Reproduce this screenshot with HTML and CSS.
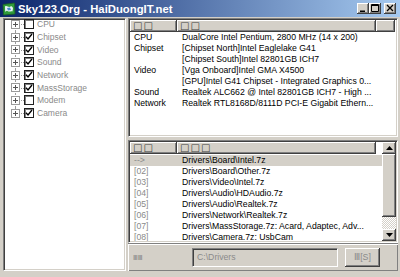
FILE: index.html
```html
<!DOCTYPE html>
<html lang="vi">
<head>
  <meta charset="UTF-8">
  <title>Sky123.Org - HaiDuongIT.net</title>
  <link rel="stylesheet" href="styles.css">
</head>
<body>
  <div class="window">
    <div class="titlebar">
      <svg class="app-icon" width="14" height="14" viewBox="0 0 14 14">
        <path d="M1 2.5 L12.5 1 L13 12 L1.5 13 Z" fill="#2f9b3a" stroke="#1c5e24" stroke-width=".8"/>
        <path d="M3 4.5 C5 3 6.5 6 8.5 4.5 C10 3.5 10.5 5 11 6 L10.5 9.5 C9 8.5 7.5 10.5 5.5 9 C4.5 8.3 3.8 9.5 3.2 10 Z" fill="#e8f4f8"/>
        <path d="M5 6 L8 5.5 L9 8 L6 8.5 Z" fill="#4a8ad0"/>
      </svg>
      <span class="title">Sky123.Org - HaiDuongIT.net</span>
      <div class="caption-btns">
        <span class="cap-btn">
          <svg width="12" height="11" viewBox="0 0 12 11"><path d="M3 7.5h5v1.5H3z" fill="#000"/></svg>
        </span>
        <span class="cap-btn">
          <svg width="12" height="11" viewBox="0 0 12 11"><path d="M2.5 1.5h7v7h-7z M2.5 2.5h7" fill="none" stroke="#000"/></svg>
        </span>
        <span class="cap-btn close">
          <svg width="12" height="11" viewBox="0 0 12 11"><path d="M3 2l6 6M9 2l-6 6" stroke="#000" stroke-width="1.3"/></svg>
        </span>
      </div>
    </div>

    <div class="main">
      <ul class="tree sunken">
        <li class="node"><span class="twig"><svg class="exp" viewBox="0 0 9 9"><rect x=".5" y=".5" width="8" height="8" fill="#fff" stroke="#9a9a9a"/><path d="M2 4.5h5M4.5 2v5" stroke="#555"/></svg></span><span class="check"></span><span class="label">CPU</span></li>
        <li class="node"><span class="twig"><svg class="exp" viewBox="0 0 9 9"><rect x=".5" y=".5" width="8" height="8" fill="#fff" stroke="#9a9a9a"/><path d="M2 4.5h5M4.5 2v5" stroke="#555"/></svg></span><span class="check on"><svg viewBox="0 0 8 8"><path d="M1 3.8l2 2.2 4-5" fill="none" stroke="#000" stroke-width="1.4"/></svg></span><span class="label">Chipset</span></li>
        <li class="node"><span class="twig"><svg class="exp" viewBox="0 0 9 9"><rect x=".5" y=".5" width="8" height="8" fill="#fff" stroke="#9a9a9a"/><path d="M2 4.5h5M4.5 2v5" stroke="#555"/></svg></span><span class="check on"><svg viewBox="0 0 8 8"><path d="M1 3.8l2 2.2 4-5" fill="none" stroke="#000" stroke-width="1.4"/></svg></span><span class="label">Video</span></li>
        <li class="node"><span class="twig"><svg class="exp" viewBox="0 0 9 9"><rect x=".5" y=".5" width="8" height="8" fill="#fff" stroke="#9a9a9a"/><path d="M2 4.5h5M4.5 2v5" stroke="#555"/></svg></span><span class="check on"><svg viewBox="0 0 8 8"><path d="M1 3.8l2 2.2 4-5" fill="none" stroke="#000" stroke-width="1.4"/></svg></span><span class="label">Sound</span></li>
        <li class="node"><span class="twig"><svg class="exp" viewBox="0 0 9 9"><rect x=".5" y=".5" width="8" height="8" fill="#fff" stroke="#9a9a9a"/><path d="M2 4.5h5M4.5 2v5" stroke="#555"/></svg></span><span class="check on"><svg viewBox="0 0 8 8"><path d="M1 3.8l2 2.2 4-5" fill="none" stroke="#000" stroke-width="1.4"/></svg></span><span class="label">Network</span></li>
        <li class="node"><span class="twig"><svg class="exp" viewBox="0 0 9 9"><rect x=".5" y=".5" width="8" height="8" fill="#fff" stroke="#9a9a9a"/><path d="M2 4.5h5M4.5 2v5" stroke="#555"/></svg></span><span class="check on"><svg viewBox="0 0 8 8"><path d="M1 3.8l2 2.2 4-5" fill="none" stroke="#000" stroke-width="1.4"/></svg></span><span class="label">MassStorage</span></li>
        <li class="node"><span class="twig"><svg class="exp" viewBox="0 0 9 9"><rect x=".5" y=".5" width="8" height="8" fill="#fff" stroke="#9a9a9a"/><path d="M2 4.5h5M4.5 2v5" stroke="#555"/></svg></span><span class="check"></span><span class="label">Modem</span></li>
        <li class="node"><span class="twig"><svg class="exp" viewBox="0 0 9 9"><rect x=".5" y=".5" width="8" height="8" fill="#fff" stroke="#9a9a9a"/><path d="M2 4.5h5M4.5 2v5" stroke="#555"/></svg></span><span class="check on"><svg viewBox="0 0 8 8"><path d="M1 3.8l2 2.2 4-5" fill="none" stroke="#000" stroke-width="1.4"/></svg></span><span class="label">Camera</span></li>
      </ul>

      <div class="right">
        <div class="info sunken">
          <div class="head info-cols">
            <span class="hcell">□□</span>
            <span class="hcell">□□</span>
            <span class="hcell"></span>
          </div>
          <div class="row info-cols"><span>CPU</span><span>DualCore Intel Pentium, 2800 MHz (14 x 200)</span></div>
          <div class="row info-cols"><span>Chipset</span><span>[Chipset North]Intel Eaglelake G41</span></div>
          <div class="row info-cols"><span></span><span>[Chipset South]Intel 82801GB ICH7</span></div>
          <div class="row info-cols"><span>Video</span><span>[Vga Onboard]Intel GMA X4500</span></div>
          <div class="row info-cols"><span></span><span>[GPU]Intel G41 Chipset - Integrated Graphics 0...</span></div>
          <div class="row info-cols"><span>Sound</span><span>Realtek ALC662 @ Intel 82801GB ICH7 - High ...</span></div>
          <div class="row info-cols"><span>Network</span><span>Realtek RTL8168D/8111D PCI-E Gigabit Ethern...</span></div>
        </div>

        <div class="drivers sunken">
          <div class="list">
            <div class="head drv-cols">
              <span class="hcell">□□</span>
              <span class="hcell">□□□</span>
            </div>
            <div class="rows">
              <div class="row drv-cols current"><span class="num">--&gt;</span><span>Drivers\Board\Intel.7z</span></div>
              <div class="row drv-cols"><span class="num">[02]</span><span>Drivers\Board\Other.7z</span></div>
              <div class="row drv-cols"><span class="num">[03]</span><span>Drivers\Video\Intel.7z</span></div>
              <div class="row drv-cols"><span class="num">[04]</span><span>Drivers\Audio\HDAudio.7z</span></div>
              <div class="row drv-cols"><span class="num">[05]</span><span>Drivers\Audio\Realtek.7z</span></div>
              <div class="row drv-cols"><span class="num">[06]</span><span>Drivers\Network\Realtek.7z</span></div>
              <div class="row drv-cols"><span class="num">[07]</span><span>Drivers\MassStorage.7z: Acard, Adaptec, Adv...</span></div>
              <div class="row drv-cols"><span class="num">[08]</span><span>Drivers\Camera.7z: UsbCam</span></div>
            </div>
          </div>
          <div class="vscroll">
            <span class="sb-btn"><svg width="7" height="4" viewBox="0 0 7 4"><path d="M3.5 0L7 4H0z" fill="#000"/></svg></span>
            <span class="sb-thumb"></span>
            <span class="sb-track"></span>
            <span class="sb-btn"><svg width="7" height="4" viewBox="0 0 7 4"><path d="M0 0h7L3.5 4z" fill="#000"/></svg></span>
          </div>
        </div>

        <div class="bottom">
          <span class="path-label">ⅢⅢ</span>
          <span class="path-field">C:\Drivers</span>
          <span class="btn">Ⅲ[S]</span>
        </div>
      </div>
    </div>
  </div>
</body>
</html>
```

FILE: styles.css
```css
* {
  box-sizing: border-box;
}

body {
  margin: 0;
  background: #d4d0c8;
  font-family: "Liberation Sans", Arial, sans-serif;
  font-size: 8.7px;
  color: #000;
}

.window {
  width: 400px;
  height: 277px;
  background: #d4d0c8;
  overflow: hidden;
}

/* title bar */
.titlebar {
  height: 17px;
  display: flex;
  align-items: center;
  padding: 0 4px 0 2px;
  background: linear-gradient(to right, #0a246a, #a6caf0);
}

.app-icon {
  flex: none;
  margin-right: 2px;
}

.title {
  flex: 1;
  color: #fff;
  font-weight: bold;
  font-size: 11.3px;
  white-space: nowrap;
}

.caption-btns {
  display: flex;
}

.cap-btn {
  width: 12px;
  height: 11px;
  display: block;
  background: #d4d0c8;
  box-shadow: inset -1px -1px #404040, inset 1px 1px #fff, inset -2px -2px #808080;
}

.cap-btn svg {
  display: block;
}

.cap-btn.close {
  margin-left: 3px;
}

/* shared chrome */
.sunken {
  border: 1px solid;
  border-color: #808080 #fff #fff #808080;
  box-shadow: inset 1px 1px #404040, inset -1px -1px #d4d0c8;
  padding: 1px;
  background: #fff;
}

.main {
  display: flex;
  gap: 2px;
  height: 254px;
  padding: 1px 2px 0 3px;
}

/* tree */
.tree {
  width: 123px;
  flex: none;
  margin: 0;
  list-style: none;
  padding-top: 0;
}

.node {
  display: flex;
  align-items: center;
  height: 12.7px;
}

.node:first-child {
  margin-top: -1px;
}

.twig {
  position: relative;
  width: 19px;
  height: 100%;
  flex: none;
  display: flex;
  align-items: center;
}

.twig::before {
  content: "";
  position: absolute;
  left: 10px;
  top: 0;
  bottom: 0;
  border-left: 1px dotted #9a9a9a;
}

.node:first-child .twig::before {
  top: 50%;
}

.node:last-child .twig::before {
  bottom: 50%;
}

.twig::after {
  content: "";
  position: absolute;
  left: 10px;
  right: 0;
  top: 50%;
  border-top: 1px dotted #9a9a9a;
}

.exp {
  position: relative;
  z-index: 1;
  width: 9px;
  height: 9px;
  margin-left: 6px;
  display: block;
}

.check {
  width: 10px;
  height: 10px;
  flex: none;
  border: 1px solid #202020;
  box-shadow: inset 1px 1px #808080;
  background: #fff;
  display: flex;
}

.check svg {
  width: 8px;
  height: 8px;
}

.label {
  margin-left: 3px;
  color: #8a8a8a;
  font-size: 8.5px;
  white-space: nowrap;
}

/* right side */
.right {
  flex: 1;
  display: flex;
  flex-direction: column;
  min-width: 0;
}

.info {
  height: 119px;
  margin-bottom: 3px;
  flex: none;
}

.head {
  height: 12px;
}

.hcell {
  display: block;
  height: 12px;
  line-height: 12px;
  padding-left: 3px;
  background: #d4d0c8;
  box-shadow: inset -1px -1px #404040, inset 1px 1px #fff, inset -2px -2px #808080;
  color: #404040;
  font-family: "DejaVu Sans", sans-serif;
  font-size: 10px;
  letter-spacing: 1px;
  overflow: hidden;
}

.info-cols {
  display: grid;
  grid-template-columns: 47px 199px 19px;
}

.drv-cols {
  display: grid;
  grid-template-columns: 47px 199px;
}

.row {
  height: 11px;
  line-height: 11px;
  white-space: nowrap;
}

.row span {
  overflow: hidden;
}

.row span:first-child {
  padding-left: 4px;
}

.row span:nth-child(2) {
  padding-left: 5px;
}

.drivers {
  flex: 1;
  display: flex;
  min-height: 0;
}

.list {
  flex: 1;
  overflow: hidden;
}

.rows {
  padding-top: 1px;
}

.row.current {
  background: #d4d0c8;
}

.num {
  color: #8a8a8a;
}

.vscroll {
  width: 14px;
  flex: none;
  display: flex;
  flex-direction: column;
}

.sb-btn,
.sb-thumb {
  display: flex;
  align-items: center;
  justify-content: center;
  background: #d4d0c8;
  box-shadow: inset -1px -1px #404040, inset 1px 1px #fff, inset -2px -2px #808080;
}

.sb-btn {
  height: 12px;
}

.sb-thumb {
  height: 63px;
}

.sb-track {
  flex: 1;
  background-image: repeating-conic-gradient(#fff 0 25%, #d4d0c8 0 50%);
  background-size: 2px 2px;
}

/* bottom bar */
.bottom {
  height: 28px;
  flex: none;
  display: flex;
  align-items: center;
  padding-left: 5px;
  box-shadow: inset 1px 1px #fff, inset -1px -1px #808080;
  border-top: 1px solid #808080;
}

.path-label {
  width: 59px;
  flex: none;
  color: #808080;
  font-size: 7px;
  font-family: "DejaVu Sans", sans-serif;
}

.path-field {
  width: 146px;
  height: 19px;
  line-height: 17px;
  padding-left: 4px;
  flex: none;
  color: #8a8a8a;
  border: 1px solid;
  border-color: #808080 #fff #fff #808080;
  box-shadow: inset 1px 1px #404040;
}

.btn {
  width: 35px;
  height: 19px;
  margin-left: 7px;
  flex: none;
  line-height: 19px;
  text-align: center;
  color: #8a8a8a;
  background: #d4d0c8;
  box-shadow: inset -1px -1px #404040, inset 1px 1px #fff, inset -2px -2px #808080;
}
```
